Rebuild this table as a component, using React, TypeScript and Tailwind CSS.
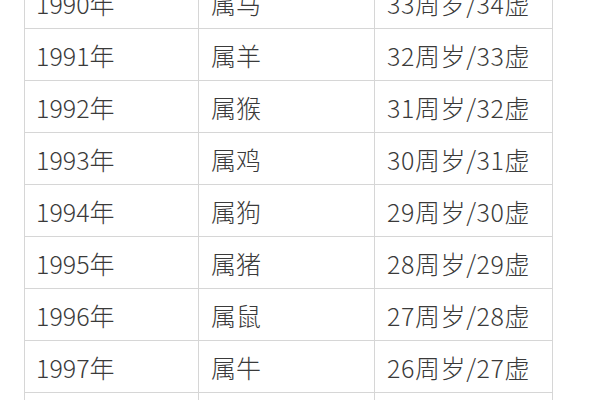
import React from "react";

const rows = [
  ["1990年", "属马", "33周岁/34虚"],
  ["1991年", "属羊", "32周岁/33虚"],
  ["1992年", "属猴", "31周岁/32虚"],
  ["1993年", "属鸡", "30周岁/31虚"],
  ["1994年", "属狗", "29周岁/30虚"],
  ["1995年", "属猪", "28周岁/29虚"],
  ["1996年", "属鼠", "27周岁/28虚"],
  ["1997年", "属牛", "26周岁/27虚"],
  ["1998年", "属虎", "25周岁/26虚"],
];

export default function App() {
  return (
    <div className="w-[600px] h-[400px] overflow-hidden bg-white">
      <div
        className="ml-[24px] mt-[-24px] w-[528px] border-l border-t border-[#d6d6d6] text-[25px] font-light text-[#3a3a3a]"
        style={{ fontFamily: '"Noto Sans CJK SC", "Noto Sans", sans-serif' }}
      >
        {rows.map((r, i) => (
          <div key={i} className="grid grid-cols-[174px_176px_178px] h-[52px]">
            {r.map((c, j) => (
              <div
                key={j}
                className={`flex items-center h-[52px] border-b border-r border-[#d6d6d6] pt-[3px] ${j === 0 ? "pl-[11px]" : "pl-[12px]"} ${j === 2 ? "tracking-[0.6px]" : ""}`}
              >
                {c}
              </div>
            ))}
          </div>
        ))}
      </div>
    </div>
  );
}
